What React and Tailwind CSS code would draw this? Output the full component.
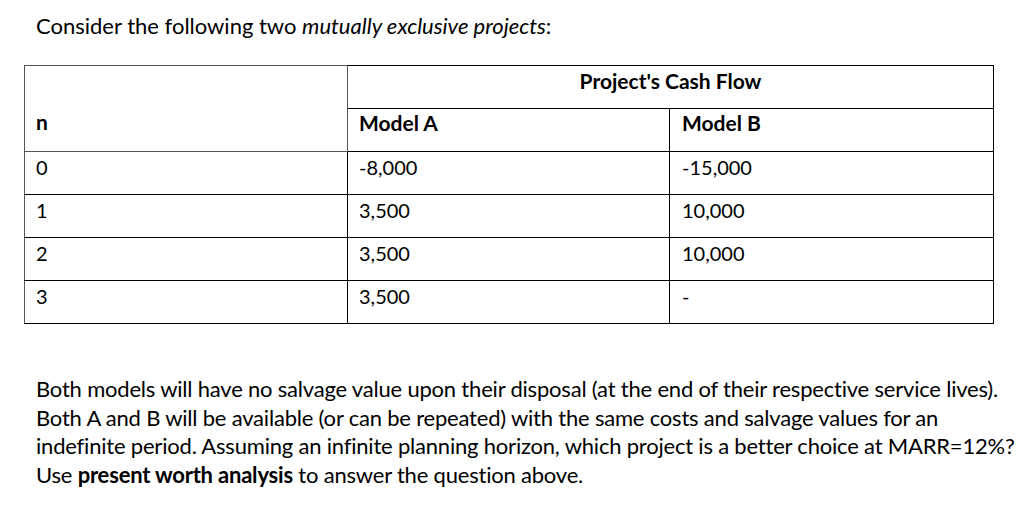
const ROWS = [
  { n: '0', a: '-8,000', b: '-15,000' },
  { n: '1', a: '3,500', b: '10,000' },
  { n: '2', a: '3,500', b: '10,000' },
  { n: '3', a: '3,500', b: '-' },
];

export default function App() {
  return (
    <div className="w-[1034px] h-[512px] bg-white text-black font-['Lato','Open_Sans',sans-serif] overflow-hidden">
      {/* Intro line */}
      <p className="pl-[36px] pt-[13px] text-[22px] leading-[26px]">
        Consider the following two <i>mutually exclusive projects</i>:
      </p>

      {/* Cash flow table */}
      <table className="ml-[24px] mt-[26px] w-[969px] border-collapse text-[20px] leading-[26px] table-fixed">
        <colgroup>
          <col className="w-[323px]" />
          <col className="w-[322px]" />
          <col className="w-[324px]" />
        </colgroup>
        <tbody>
          <tr className="h-[43px]">
            <td rowSpan={2} className="border border-[#555] align-bottom px-[11px] pb-[16px] font-bold text-[21px]">
              n
            </td>
            <td colSpan={2} className="border border-black align-top text-center pt-[2px] font-bold text-[21px]">
              Project's Cash Flow
            </td>
          </tr>
          <tr className="h-[43px]">
            <td className="border border-black align-top px-[11px] pt-[1px] font-bold text-[21px]">Model A</td>
            <td className="border border-black border-l-[#808080] align-top px-[12px] pt-[1px] font-bold text-[21px]">Model B</td>
          </tr>
          {ROWS.map((r) => (
            <tr key={r.n} className="h-[43px]">
              <td className="border border-black border-l-[#555] align-top px-[11px] pt-[2px]">{r.n}</td>
              <td className="border border-black align-top px-[11px] pt-[2px]">{r.a}</td>
              <td className="border border-black border-l-[#808080] align-top px-[12px] pt-[2px]">{r.b}</td>
            </tr>
          ))}
        </tbody>
      </table>

      {/* Question */}
      <div className="pl-[36px] pt-[51px] text-[22px] leading-[28.5px] tracking-[-0.2px]">
        <p>Both models will have no salvage value upon their disposal (at the end of their respective service lives).</p>
        <p>Both A and B will be available (or can be repeated) with the same costs and salvage values for an</p>
        <p>indefinite period. Assuming an infinite planning horizon, which project is a better choice at MARR=12%?</p>
        <p>
          Use <b>present worth analysis</b> to answer the question above.
        </p>
      </div>
    </div>
  );
}
